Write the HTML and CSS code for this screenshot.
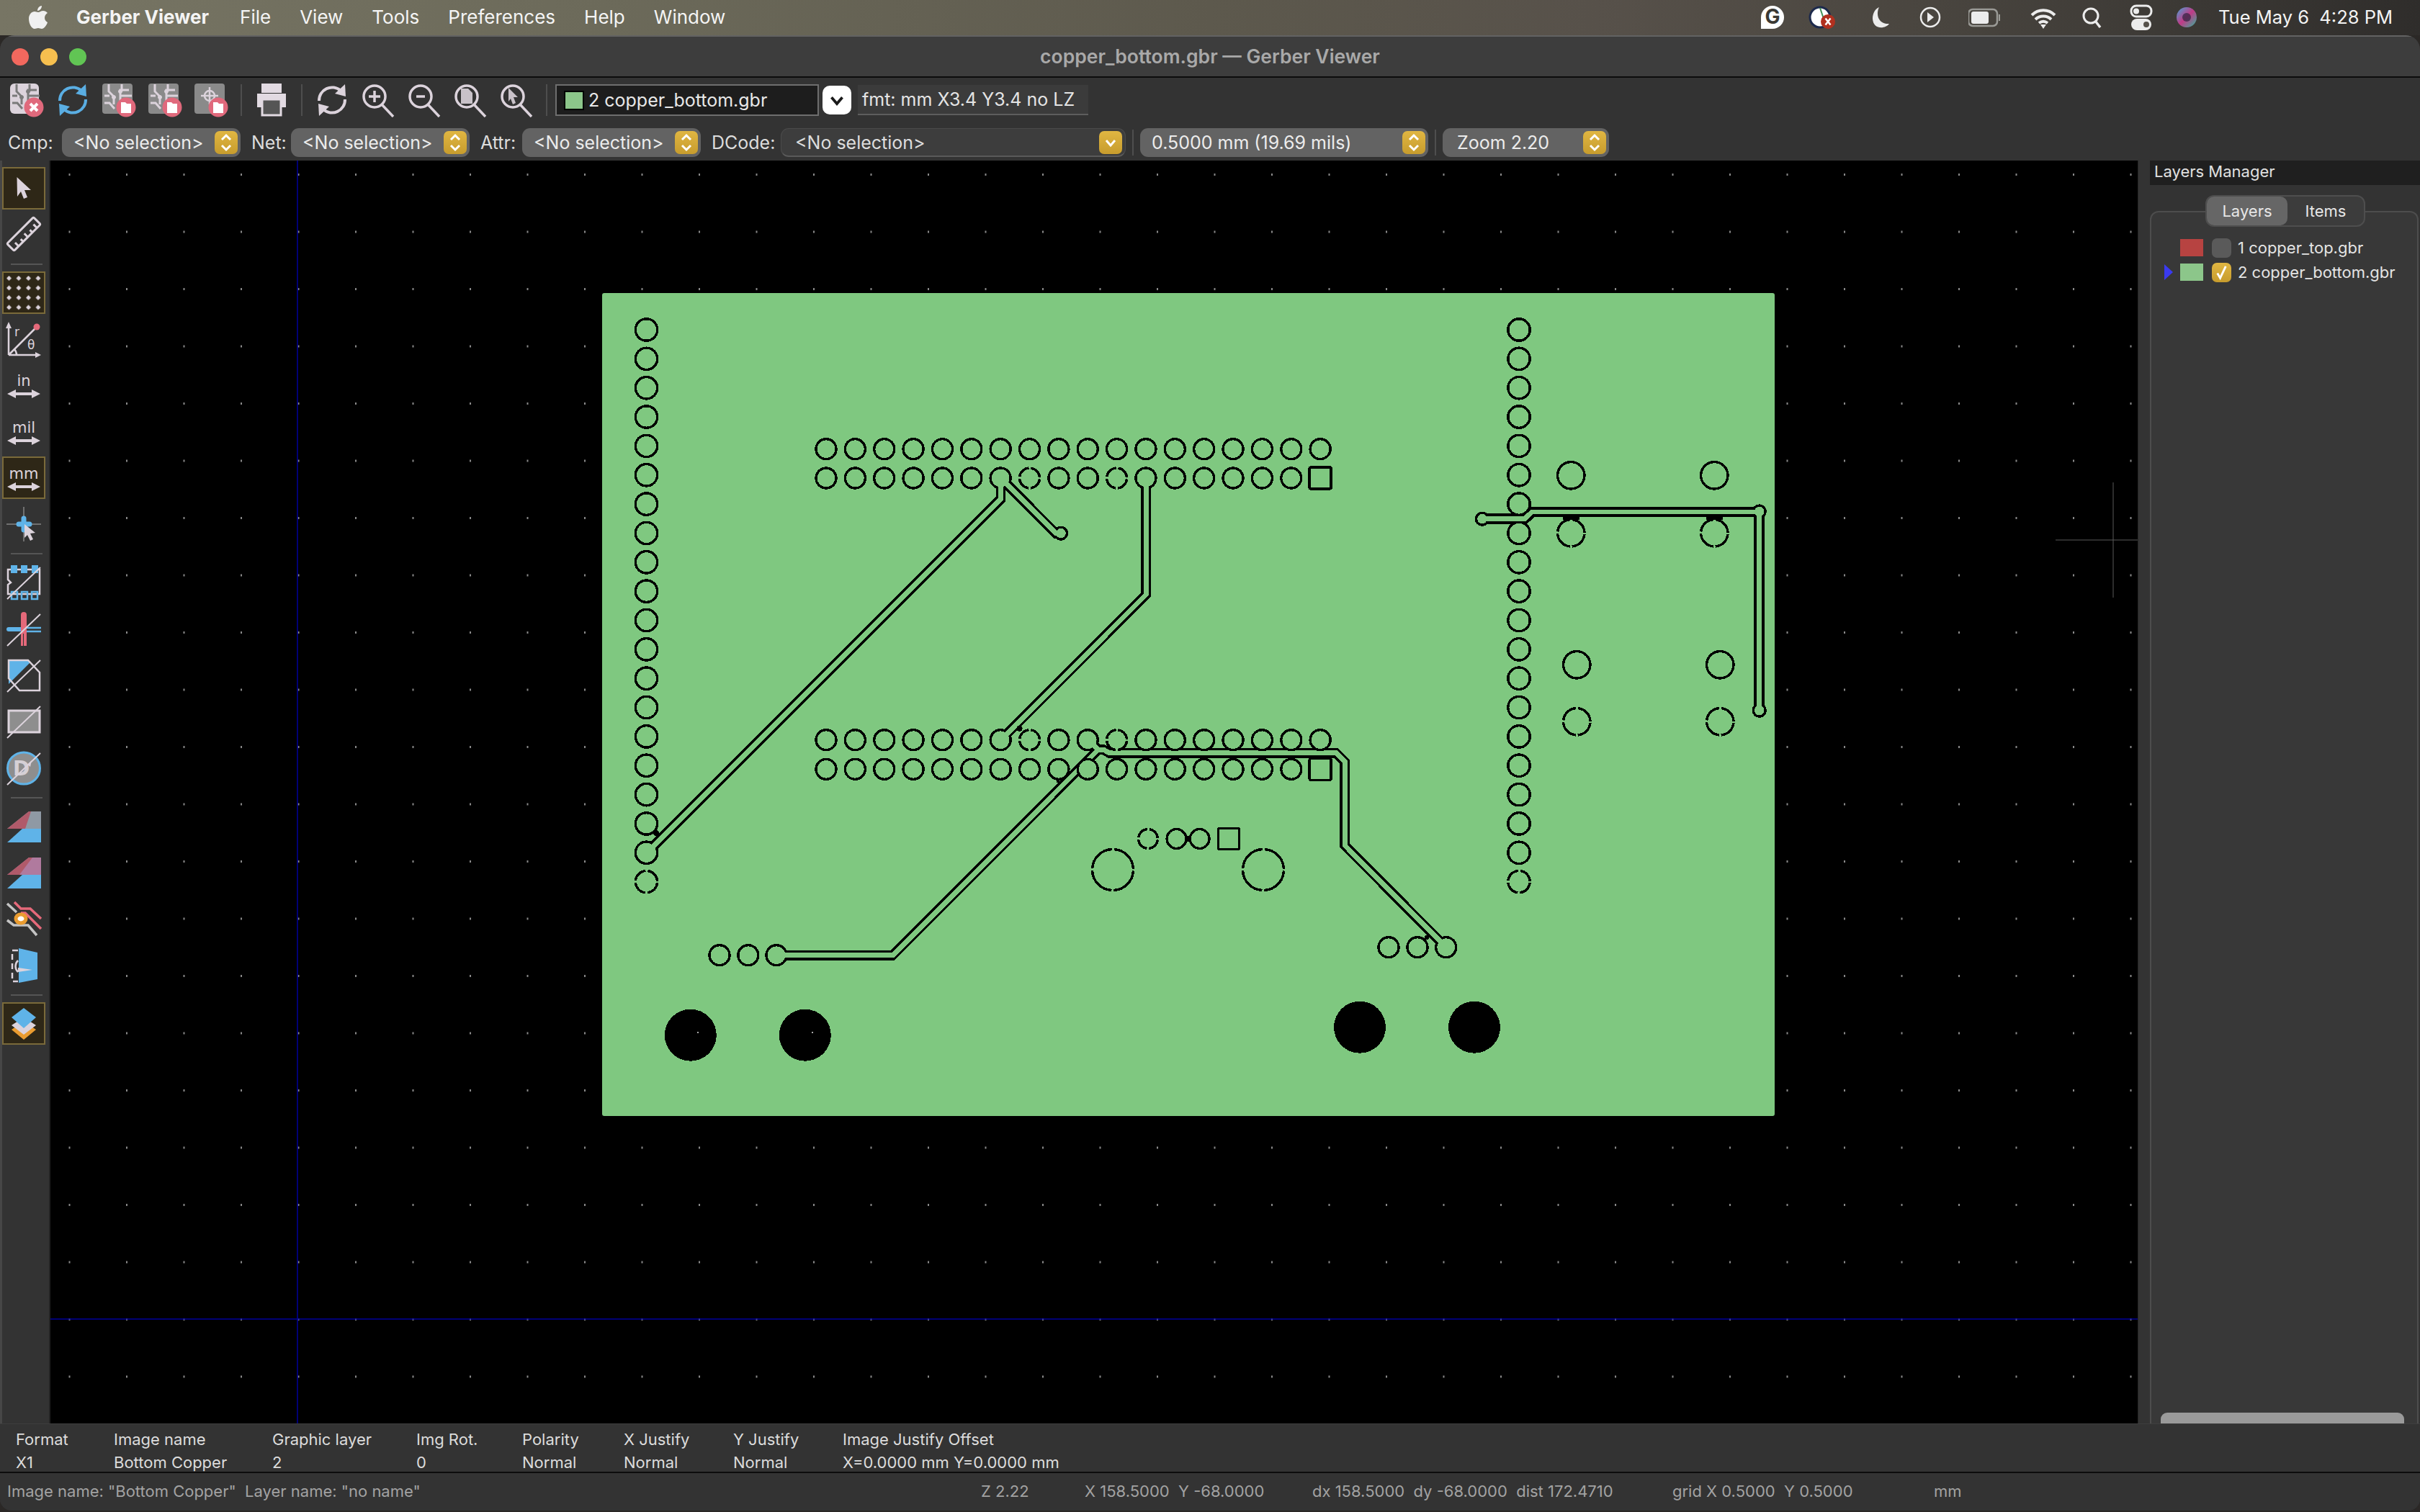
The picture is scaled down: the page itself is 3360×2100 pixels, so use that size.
FILE: index.html
```html
<!DOCTYPE html>
<html lang="en">
  <head>
    <meta charset="UTF-8" />
    <title>copper_bottom.gbr — Gerber Viewer</title>
    <link rel="stylesheet" href="styles.css">
  </head>
  <body>
    <svg class="defs" width="0" height="0">
      <symbol id="i-updown" viewBox="0 0 32 32">
        <path class="chev" d="M10 12 L16 6 L22 12 M10 20 L16 26 L22 20" />
      </symbol>
      <symbol id="i-down" viewBox="0 0 32 32">
        <path class="chev" d="M10 13 L16 20 L22 13" />
      </symbol>
      <symbol id="i-traces" viewBox="0 0 48 48">
        <path d="M10 2 V12 L17 19 V30 M4 18 H11 M4 28 H11 L18 36 M28 2 V12 M38 10 H26 V24 L36 32 M26 18 H42 M42 26 H34" fill="none" stroke-width="3" />
        <circle cx="17" cy="20" r="2.5" /><circle cx="26" cy="12" r="2.5" />
      </symbol>
      <symbol id="i-folder-badge" viewBox="0 0 48 48">
        <circle cx="34" cy="34" r="13.5" fill="#e0697c" />
        <path d="M27 27 H33 L35 29 H41 V42 H27 Z" fill="#ffffff" />
      </symbol>
    </svg>

    <div class="menubar">
      <svg class="apple" viewBox="0 0 28 34"><path d="M19 1 C19 5 16 8 13 8 C13 4 16 1 19 1 Z M14 10 C16 10 18 8 21 8 C23 8 25.500 9 27 11 C24 13 23 15 23 18 C23 21 25 23 27 24 C26 28 22 33 19 33 C17 33 16 32 14 32 C12 32 11 33 9 33 C5 33 1 26 1 19 C1 13 5 9 9 9 C11 9 12.500 10 14 10 Z" /></svg>
      <span class="app-name">Gerber Viewer</span>
      <span class="menu-item">File</span>
      <span class="menu-item">View</span>
      <span class="menu-item">Tools</span>
      <span class="menu-item">Preferences</span>
      <span class="menu-item">Help</span>
      <span class="menu-item">Window</span>
      <div class="tray">
        <svg class="tray-icon" viewBox="0 0 44 40"><path d="M22 4 A16 16 0 1 1 22 36 H6 V20 A16 16 0 0 1 22 4 Z" fill="#ffffff" /><text class="tray-g" x="22" y="29">G</text></svg>
        <svg class="tray-icon gap-a" viewBox="0 0 44 40"><circle cx="17" cy="20" r="14" fill="#ffffff" stroke="#1d2a4c" stroke-width="3" /><path d="M17 7 L22 22" stroke="#3f8f55" stroke-width="2" /><circle cx="28" cy="26" r="10" fill="#b1301f" /><path d="M24.500 21.500 L31.500 30.500 M31.500 21.500 L24.500 30.500" stroke="#ffffff" stroke-width="2.500" /></svg>
        <svg class="tray-icon gap-b" viewBox="0 0 44 40"><path d="M20 6 C15 16 19 30 34 29 C29 36 12 38 11 22 C11 14 15 8 20 6 Z" fill="#ececec" /></svg>
        <svg class="tray-icon gap-c" viewBox="0 0 44 40"><circle cx="22" cy="24" r="13" fill="none" stroke="#ececec" stroke-width="2.500" transform="translate(0 -4)" /><path d="M18 13 L27 20 L18 27 Z" fill="#ececec" /></svg>
        <svg class="tray-icon gap-d" viewBox="0 0 44 40"><rect x="0" y="9" width="40" height="23" rx="6" fill="none" stroke="#9a9a96" stroke-width="2.500" /><rect x="4" y="12" width="24" height="17" rx="3" fill="#ececec" /><rect x="42" y="16" width="2" height="9" fill="#9a9a96" /></svg>
        <svg class="tray-icon gap-e" viewBox="0 0 44 40"><path d="M6 17 C15 8 29 8 38 17 M11 23 C17 17 27 17 33 23 M16 28 C20 25 24 25 28 28" fill="none" stroke="#ececec" stroke-width="4" /><path d="M18 30 L26 30 L22 36 Z" fill="#ececec" /></svg>
        <svg class="tray-icon gap-f" viewBox="0 0 44 40"><circle cx="20" cy="18" r="10" fill="none" stroke="#ececec" stroke-width="3" /><path d="M26 25 L33 34" stroke="#ececec" stroke-width="3.500" /></svg>
        <svg class="tray-icon gap-f" viewBox="0 0 44 40"><rect x="8" y="4" width="28" height="15" rx="7" fill="none" stroke="#ececec" stroke-width="3" /><circle cx="15" cy="11.500" r="4" fill="#ececec" /><rect x="8" y="22" width="28" height="16" rx="8" fill="#ececec" /><circle cx="29" cy="30" r="4" fill="#55504a" /></svg>
        <svg class="tray-icon gap-g" viewBox="0 0 44 40"><defs><linearGradient id="siri" x1="0" y1="0" x2="1" y2="1"><stop offset="0" stop-color="#45a6d8" /><stop offset="0.500" stop-color="#c03a86" /><stop offset="1" stop-color="#2fb89c" /></linearGradient></defs><circle cx="22" cy="20" r="14" fill="url(#siri)" /><circle cx="22" cy="20" r="6" fill="#2e2340" opacity="0.700" /></svg>
        <span class="clock">Tue May 6&nbsp; 4:28 PM</span>
      </div>
    </div>

    <div class="window">
      <div class="titlebar">
        <div class="lights">
          <span class="light red"></span>
          <span class="light yellow"></span>
          <span class="light green"></span>
        </div>
        <span class="title">copper_bottom.gbr — Gerber Viewer</span>
      </div>

      <div class="toolbar top-row">
        <div class="tb-btn"><svg viewBox="0 0 48 48"><rect x="1" y="1" width="40" height="42" rx="6" fill="#dcd3dc" /><use href="#i-traces" class="traces-dark" /><circle cx="34" cy="34" r="13.500" fill="#e0697c" /><path d="M29 29 L39 39 M39 29 L29 39" stroke="#ffffff" stroke-width="4" /></svg></div>
        <div class="tb-btn"><svg viewBox="0 0 48 48"><path class="arc-blue" d="M6 25 A18 18 0 0 1 36 11" /><path d="M42 2 L43 19 L28 15 Z" fill="#5aaee3" /><path class="arc-blue" d="M42 23 A18 18 0 0 1 12 37" /><path d="M6 46 L5 29 L20 33 Z" fill="#5aaee3" /></svg></div>
        <div class="tb-btn"><svg viewBox="0 0 48 48"><rect x="1" y="1" width="42" height="42" rx="4" fill="#8a8a8a" /><use href="#i-traces" class="traces-light" /><use href="#i-folder-badge" /></svg></div>
        <div class="tb-btn"><svg viewBox="0 0 48 48"><rect x="1" y="1" width="42" height="42" rx="4" fill="#8a8a8a" /><use href="#i-traces" class="traces-light" /><use href="#i-folder-badge" /></svg></div>
        <div class="tb-btn"><svg viewBox="0 0 48 48"><rect x="1" y="1" width="42" height="42" rx="4" fill="#8a8a8a" /><circle cx="22" cy="18" r="7" class="line-lilac" /><path class="line-lilac" d="M22 6 V30 M10 18 H34" /><use href="#i-folder-badge" /></svg></div>
        <span class="tb-sep"></span>
        <div class="tb-btn"><svg viewBox="0 0 48 48"><path d="M10 1 H38 V14 H10 Z" fill="#e2dae2" /><path d="M4 15 H44 V34 H37 V24 H11 V34 H4 Z" fill="#e2dae2" /><path d="M11 23 H37 V45 H11 Z" fill="#555555" stroke="#e2dae2" stroke-width="3" /></svg></div>
        <span class="tb-sep"></span>
        <div class="tb-btn"><svg viewBox="0 0 48 48"><path class="arc-lilac" d="M6 25 A18 18 0 0 1 36 11" /><path d="M42 2 L43 19 L28 15 Z" fill="#dcd3dc" /><path class="arc-lilac" d="M42 23 A18 18 0 0 1 12 37" /><path d="M6 46 L5 29 L20 33 Z" fill="#dcd3dc" /></svg></div>
        <div class="tb-btn"><svg viewBox="0 0 48 48"><circle cx="19" cy="19" r="15" class="lens" /><path class="lens" d="M29 30 L45 47" /><path class="lens" d="M11 19 H27 M19 11 V27" /></svg></div>
        <div class="tb-btn"><svg viewBox="0 0 48 48"><circle cx="19" cy="19" r="15" class="lens" /><path class="lens" d="M29 30 L45 47" /><path class="lens" d="M13 19 H25" /></svg></div>
        <div class="tb-btn"><svg viewBox="0 0 48 48"><circle cx="19" cy="19" r="15" class="lens" /><path class="lens" d="M29 30 L45 47" /><path d="M11 8 H21 L27 14 V29 H11 Z" fill="#c9c2c9" /></svg></div>
        <div class="tb-btn"><svg viewBox="0 0 48 48"><circle cx="19" cy="19" r="15" class="lens" /><path class="lens" d="M29 30 L45 47" /><path d="M13 7 L26 20 L20 20 L23 28 L19 30 L16 22 L13 26 Z" fill="#c9c2c9" /></svg></div>
        <span class="tb-sep"></span>
        <div class="layer-combo">
          <span class="combo-swatch"></span>
          <span>2 copper_bottom.gbr</span>
        </div>
        <div class="combo-arrow"><svg viewBox="0 0 32 32"><use href="#i-down" /></svg></div>
        <div class="fmt-box">fmt: mm X3.4 Y3.4 no LZ</div>
      </div>

      <div class="toolbar bottom-row">
        <label class="tb-label cmp">Cmp:</label>
        <div class="select w-sel"><span>&lt;No selection&gt;</span><span class="stepper"><svg viewBox="0 0 32 32"><use href="#i-updown" /></svg></span></div>
        <label class="tb-label net">Net:</label>
        <div class="select w-sel"><span>&lt;No selection&gt;</span><span class="stepper"><svg viewBox="0 0 32 32"><use href="#i-updown" /></svg></span></div>
        <label class="tb-label attr">Attr:</label>
        <div class="select w-sel"><span>&lt;No selection&gt;</span><span class="stepper"><svg viewBox="0 0 32 32"><use href="#i-updown" /></svg></span></div>
        <label class="tb-label dcode">DCode:</label>
        <div class="select select-dark w-dcode"><span>&lt;No selection&gt;</span><span class="stepper"><svg viewBox="0 0 32 32"><use href="#i-down" /></svg></span></div>
        <span class="tb-sep short"></span>
        <div class="select w-grid"><span>0.5000 mm (19.69 mils)</span><span class="stepper"><svg viewBox="0 0 32 32"><use href="#i-updown" /></svg></span></div>
        <span class="tb-sep short"></span>
        <div class="select w-zoom"><span>Zoom 2.20</span><span class="stepper"><svg viewBox="0 0 32 32"><use href="#i-updown" /></svg></span></div>
      </div>

      <div class="workspace">
        <div class="side-tools">
          <div class="tool on"><svg viewBox="0 0 48 48"><path class="fill-lilac" d="M14.500 9 L34 27 L25 27 L29 37 L24 39 L20 29 L15 36 Z" /></svg></div>
          <div class="tool"><svg viewBox="0 0 48 48"><g transform="rotate(-45 24 24)"><rect x="-2" y="17" width="52" height="14" rx="2" class="line-lilac thick" /><path class="line-lilac thick" d="M7 31 V24 M16 31 V26 M25 31 V24 M34 31 V26 M43 31 V24" /></g></svg></div>
          <span class="side-sep"></span>
          <div class="tool on"><svg viewBox="0 0 48 48"><defs><pattern id="tool-dots" x="-3" y="-3" width="13.500" height="13.500" patternUnits="userSpaceOnUse"><path class="fill-lilac" d="M6.500 3 L10 6.500 L6.500 10 L3 6.500 Z" /></pattern></defs><rect width="48" height="48" fill="url(#tool-dots)" /></svg></div>
          <div class="tool"><svg viewBox="0 0 48 48"><path class="line-lilac" d="M3 46 V6 M3 46 H42 M3 46 L40 9" /><path class="fill-lilac" d="M3 0 L7 9 H-1 Z M48 46 L40 42 V50 Z" /><circle cx="42" cy="7" r="4.500" fill="#e5697a" /><path class="line-lilac" d="M14 46 A12 12 0 0 0 11 38" /><text class="polar-text" x="11" y="20">r</text><text class="polar-text" x="29" y="38">θ</text></svg></div>
          <div class="tool"><svg viewBox="0 0 48 48"><text class="unit-text" x="24" y="25">in</text><path class="fill-lilac" d="M1 36 L13 30 V34 H35 V30 L47 36 L35 42 V38 H13 V42 Z" /></svg></div>
          <div class="tool"><svg viewBox="0 0 48 48"><text class="unit-text" x="24" y="25">mil</text><path class="fill-lilac" d="M1 36 L13 30 V34 H35 V30 L47 36 L35 42 V38 H13 V42 Z" /></svg></div>
          <div class="tool on"><svg viewBox="0 0 48 48"><text class="unit-text" x="24" y="25">mm</text><path class="fill-lilac" d="M1 36 L13 30 V34 H35 V30 L47 36 L35 42 V38 H13 V42 Z" /></svg></div>
          <div class="tool"><svg viewBox="0 0 48 48"><path class="line-gray" d="M24 0 V48 M0 24 H48" /><path class="blue-plus" d="M17 24 H32 M24 16 V32" /><path class="fill-lilac" d="M25 24 L40 36 L33 37 L37 45 L33 47 L29 39 L25 43 Z" /></svg></div>
          <span class="side-sep"></span>
          <div class="tool"><svg viewBox="0 0 48 48"><path class="line-lilac" d="M2 6 H46 V40 H2 V27 L6 24 L2 20 Z" /><path class="fill-blue" d="M6 0 H15 V11 H6 Z M20 0 H29 V11 H20 Z M35 0 H44 V11 H35 Z" /><path class="line-blue" d="M7 37 H15 V47 H7 Z M21 37 H29 V47 H21 Z M35 37 H43 V47 H35 Z" /><path class="slash" d="M1 47 L47 3" /></svg></div>
          <div class="tool"><svg viewBox="0 0 48 48"><path class="fill-blue" d="M0 24 A3 3 0 0 1 3 21 H20 V27 H3 A3 3 0 0 1 0 24 Z" /><path class="line-blue" d="M28 22 H48 M28 27 H48" /><path d="M20 4 A4 4 0 0 1 28 4 V47 H24 V30 H23 V47 H20 Z" fill="#e5697a" /><path class="slash" d="M1 47 L47 3" /></svg></div>
          <div class="tool"><svg viewBox="0 0 48 48"><path d="M3 3 H30 L33 6 L3 36 Z" fill="#5fb3e8" /><path class="line-lilac" d="M3 3 H30 L46 20 V45 H18 L3 28 Z" /><path class="slash" d="M1 47 L47 3" /></svg></div>
          <div class="tool"><svg viewBox="0 0 48 48"><rect x="3" y="9" width="43" height="30" fill="#8e8e8e" class="line-lilac-on" /><path class="slash" d="M1 47 L47 3" /></svg></div>
          <div class="tool"><svg viewBox="0 0 48 48"><ellipse cx="24" cy="24" rx="22.500" ry="22" fill="#8e8e8e" stroke="#5fb3e8" stroke-width="3" /><text class="d-text" x="9" y="34">D</text><path class="fill-lilac" d="M29 19 L35 13 L33 22 Z" /><path class="slash" d="M1 47 L47 3" /></svg></div>
          <span class="side-sep"></span>
          <div class="tool"><svg viewBox="0 0 48 48"><path d="M1 27 L31 3 H48 V27 Z" fill="#8f99a4" /><path d="M1 27 L31 3 H34 L10 27 Z M10 27 L34 3 L26 27 Z" fill="#b05a6a" /><path d="M1 46 L22 27 H48 V46 Z" fill="#5fb3e8" /></svg></div>
          <div class="tool"><svg viewBox="0 0 48 48"><path d="M1 27 L31 3 H48 V27 Z" fill="#b07a9e" /><path d="M1 27 L31 3 H36 L18 27 Z" fill="#b05a6a" /><path d="M1 46 L22 27 H48 V46 Z" fill="#5fb3e8" /></svg></div>
          <div class="tool"><svg viewBox="0 0 48 48"><path class="net-pink" d="M11 1 L20 10 H33 L48 24 M20 16 H26 L48 38" /><path class="net-gray" d="M1 3 L14 15 M1 26 L10 33 H30 L42 47" /><ellipse cx="20" cy="24" rx="7" ry="6" fill="#ffffff" stroke="#ea9c30" stroke-width="5" /></svg></div>
          <div class="tool"><svg viewBox="0 0 48 48"><path class="line-lilac dash" d="M16 3 H8 V46 H16" /><path d="M17 0 L43 6 V43 L17 48 Z" fill="#5fb3e8" /><path class="line-lilac" d="M16 17 A11 11 0 0 0 16 33" /><path class="fill-lilac" d="M16 27 L36 30 L16 33 Z" /></svg></div>
          <span class="side-sep"></span>
          <div class="tool on"><svg viewBox="0 0 48 48"><path d="M7 32 L24 21 L41 32 L24 46 Z" fill="#ea9c30" /><path d="M7 26 L24 15 L41 26 L24 39 Z" fill="#dcd3dc" /><path d="M7 15 L24 2 L41 15 L24 30 Z" fill="#5fb3e8" /></svg></div>
        </div>

        <div class="canvas">
          <svg id="board" viewBox="70 223 2898 1755" width="2898" height="1755">
            <defs>
              <pattern id="grid" x="890.500" y="400" width="79.500" height="79.500" patternUnits="userSpaceOnUse">
                <rect class="grid-dot" x="0" y="0" width="2" height="3" />
              </pattern>
            </defs>
            <rect x="70" y="223" width="2898" height="1755" fill="url(#grid)" />
            <path class="axis" d="M413 223 V1978 M70 1832 H2968" />
            <path class="cursor-cross" d="M2934 670 V830 M2854 750 H2968" />
            <rect class="board-plate" x="836" y="407" width="1628" height="1143" rx="3" />
            <g id="copper"></g>
          </svg>
        </div>

        <div class="layers-panel">
          <div class="panel-title">Layers Manager</div>
          <div class="tabs">
            <span class="tab active">Layers</span>
            <span class="tab">Items</span>
          </div>
          <div class="group">
            <div class="layer-row">
              <span class="row-arrow"></span>
              <span class="layer-swatch red"></span>
              <span class="check"></span>
              <span>1 copper_top.gbr</span>
            </div>
            <div class="layer-row">
              <span class="row-arrow current"></span>
              <span class="layer-swatch green"></span>
              <span class="check checked"><svg viewBox="0 0 28 28"><path d="M8 15 L12 22 L20 5" /></svg></span>
              <span>2 copper_bottom.gbr</span>
            </div>
            <div class="hscroll"></div>
          </div>
        </div>
      </div>

      <div class="msg-panel">
        <div class="msg-col c-format"><span>Format</span><span>X1</span></div>
        <div class="msg-col c-name"><span>Image name</span><span>Bottom Copper</span></div>
        <div class="msg-col c-layer"><span>Graphic layer</span><span>2</span></div>
        <div class="msg-col c-rot"><span>Img Rot.</span><span>0</span></div>
        <div class="msg-col c-pol"><span>Polarity</span><span>Normal</span></div>
        <div class="msg-col c-xj"><span>X Justify</span><span>Normal</span></div>
        <div class="msg-col c-yj"><span>Y Justify</span><span>Normal</span></div>
        <div class="msg-col"><span>Image Justify Offset</span><span>X=0.0000 mm Y=0.0000 mm</span></div>
      </div>

      <div class="statusbar">
        <span class="s-image">Image name: "Bottom Copper"&nbsp; Layer name: "no name"</span>
        <span class="s-zoom">Z 2.22</span>
        <span class="s-pos">X 158.5000&nbsp; Y -68.0000</span>
        <span class="s-delta">dx 158.5000&nbsp; dy -68.0000&nbsp; dist 172.4710</span>
        <span class="s-grid">grid X 0.5000&nbsp; Y 0.5000</span>
        <span>mm</span>
      </div>
    </div>

    <script src="board.js"></script>
  </body>
</html>
```

FILE: styles.css
```css
* {
  margin: 0;
  padding: 0;
  box-sizing: border-box;
}

body {
  width: 3360px;
  height: 2100px;
  overflow: hidden;
  background: #2b2826;
  font-family: "Inter", "Liberation Sans", sans-serif;
  color: #e4e4e4;
}

.defs {
  position: absolute;
}

.chev {
  fill: none;
  stroke: currentColor;
  stroke-width: 3;
}

/* Menu bar */
.menubar {
  height: 49px;
  display: flex;
  align-items: center;
  padding: 0 38px 2px 39px;
  background: linear-gradient(90deg, #777564 0%, #6c6a5a 25%, #5d594d 50%, #57514a 66%, #49453f 80%, #2f2d2b 100%);
  font-size: 26px;
  color: #f4f4f4;
}

.apple {
  width: 28px;
  height: 34px;
  fill: #f0f0f0;
  margin-right: 39px;
}

.app-name {
  font-weight: 700;
  margin-right: 43px;
}

.menu-item {
  margin-right: 40px;
}

.tray {
  margin-left: auto;
  display: flex;
  align-items: center;
}

.tray-icon {
  width: 44px;
  height: 40px;
}

.tray-g {
  font-size: 28px;
  font-weight: 700;
  text-anchor: middle;
  fill: #3b3934;
}

.gap-a { margin-left: 27px; }
.gap-b { margin-left: 35px; }
.gap-c { margin-left: 25px; }
.gap-d { margin-left: 31px; }
.gap-e { margin-left: 38px; }
.gap-f { margin-left: 24px; }
.gap-g { margin-left: 19px; }

.clock {
  margin-left: 22px;
  font-size: 25.500px;
}

/* Window */
.window {
  height: 2049px;
  display: flex;
  flex-direction: column;
  background: #333333;
  border-radius: 20px 20px 16px 16px;
  overflow: hidden;
}

.titlebar {
  height: 59px;
  flex-shrink: 0;
  position: relative;
  display: flex;
  align-items: center;
  justify-content: center;
  padding-bottom: 2px;
  background: #3d3d3d;
  border-top: 2px solid #626262;
  border-bottom: 2px solid #0c0c0c;
}

.lights {
  position: absolute;
  left: 16px;
  top: 16px;
  display: flex;
  gap: 16px;
}

.light {
  width: 24px;
  height: 24px;
  border-radius: 50%;
}

.light.red { background: #f2685e; }
.light.yellow { background: #f6bf4f; }
.light.green { background: #61c554; }

.title {
  font-size: 26.500px;
  font-weight: 600;
  color: #a9a9a9;
}

.toolbar {
  display: flex;
  align-items: center;
  flex-shrink: 0;
  background: #333333;
  font-size: 25px;
}

.top-row {
  height: 62px;
  padding-left: 5px;
}

.bottom-row {
  height: 53px;
  padding: 3px 0 0 11px;
}

.tb-btn {
  width: 64px;
  height: 48px;
  display: flex;
  justify-content: center;
}

.tb-btn svg {
  width: 48px;
  height: 48px;
}

.tb-sep {
  width: 2px;
  height: 44px;
  margin: 0 9px;
  background: #4e4e4e;
}

.tb-sep.short {
  height: 36px;
}

.traces-dark {
  stroke: #7a7a7a;
  fill: #7a7a7a;
}

.traces-light {
  stroke: #dcd3dc;
  fill: #dcd3dc;
}

.arc-blue {
  fill: none;
  stroke: #5aaee3;
  stroke-width: 4;
}

.arc-lilac {
  fill: none;
  stroke: #dcd3dc;
  stroke-width: 4;
}

.lens {
  fill: none;
  stroke: #dcd3dc;
  stroke-width: 3.500;
}

.line-lilac {
  fill: none;
  stroke: #dcd3dc;
  stroke-width: 2.500;
}

.line-lilac.thick {
  stroke-width: 3;
}

.line-lilac.dash {
  stroke-dasharray: 8 5;
}

.line-lilac-on {
  stroke: #dcd3dc;
  stroke-width: 3;
}

.line-blue {
  fill: none;
  stroke: #5fb3e8;
  stroke-width: 2.500;
}

.line-gray {
  fill: none;
  stroke: #858585;
  stroke-width: 1.500;
}

.fill-lilac { fill: #dcd3dc; }
.fill-blue { fill: #5fb3e8; }

.slash {
  fill: none;
  stroke: #dcd3dc;
  stroke-width: 2;
}

.blue-plus {
  fill: none;
  stroke: #5fb3e8;
  stroke-width: 7;
  stroke-linecap: round;
}

.net-pink {
  fill: none;
  stroke: #e5697a;
  stroke-width: 3.500;
}

.net-gray {
  fill: none;
  stroke: #c4c4c4;
  stroke-width: 3.500;
}

.polar-text {
  font-family: "DejaVu Sans", sans-serif;
  font-size: 17px;
  fill: #dcd3dc;
}

.unit-text {
  font-family: "DejaVu Sans", sans-serif;
  font-size: 21px;
  text-anchor: middle;
  fill: #dcd3dc;
}

.d-text {
  font-family: "DejaVu Sans", sans-serif;
  font-size: 28px;
  font-weight: 700;
  fill: #d5d0d5;
}

.layer-combo {
  width: 366px;
  height: 44px;
  margin-left: 2px;
  display: flex;
  align-items: center;
  gap: 6px;
  padding-left: 10px;
  background: #1d1d1d;
  border: 2px solid #6e6e6e;
  color: #e8e8e8;
}

.combo-swatch {
  width: 28px;
  height: 27px;
  background: #8cc68a;
  border: 2px solid #000000;
}

.combo-arrow {
  width: 40px;
  height: 40px;
  margin-left: 5px;
  background: #ffffff;
  border-radius: 10px;
  color: #1a1a1a;
}

.combo-arrow svg {
  display: block;
}

.fmt-box {
  width: 320px;
  height: 42px;
  margin-left: 9px;
  display: flex;
  align-items: center;
  padding-left: 6px;
  background: #3b3b3b;
  border-bottom: 2px solid #5d5d5d;
  white-space: nowrap;
}

.tb-label {
  color: #dcdcdc;
}

.cmp { width: 75px; }
.net { width: 55px; margin-left: 15px; }
.attr { width: 58px; margin-left: 15px; }
.dcode { width: 96px; margin-left: 15px; }

.select {
  height: 40px;
  display: flex;
  align-items: center;
  justify-content: space-between;
  padding: 0 4px 0 16px;
  background: #636363;
  border-radius: 11px;
  color: #ececec;
  white-space: nowrap;
}

.select-dark {
  background: #3d3d3d;
  border: 1px solid #4b4b4b;
  border-bottom: 2px solid #5a5a5a;
  padding-left: 19px;
  color: #dddddd;
}

.w-sel { width: 248px; }
.w-dcode { width: 479px; }
.w-grid { width: 400px; }
.w-zoom { width: 231px; padding-left: 20px; }

.stepper {
  width: 32px;
  height: 32px;
  border-radius: 7px;
  background: linear-gradient(#e0b642, #c79c2d);
  color: #ffffff;
}

.stepper svg {
  display: block;
}

/* Workspace */
.workspace {
  flex: 1;
  min-height: 0;
  display: flex;
}

.side-tools {
  width: 70px;
  flex-shrink: 0;
  display: flex;
  flex-direction: column;
  padding: 6px 0 0 3px;
  background: #333333;
  border-left: 3px solid #474747;
  border-right: 2px solid #232323;
}

.tool {
  width: 60px;
  height: 59px;
  margin: 2.650px 0;
  flex-shrink: 0;
  margin-left: -3px;
  display: flex;
  align-items: center;
  justify-content: center;
  border: 2px solid transparent;
}

.tool.on {
  background: #2e2717;
  border-color: #7a6a3a;
}

.tool svg {
  width: 48px;
  height: 48px;
  overflow: visible;
}

.side-sep {
  width: 44px;
  height: 2px;
  flex-shrink: 0;
  margin: 8px 0 7px 9px;
  background: #555555;
}

.canvas {
  width: 2898px;
  flex-shrink: 0;
  background: #000000;
}

.canvas svg {
  display: block;
}

.grid-dot {
  fill: #8a8a8a;
}

.axis {
  fill: none;
  stroke: #00009c;
  stroke-width: 1.500;
}

.cursor-cross {
  fill: none;
  stroke: #5a5a5a;
  stroke-width: 1;
}

.board-plate {
  fill: #7fc880;
}

#copper {
  shape-rendering: crispEdges;
}

.trace-outer {
  fill: none;
  stroke: #000000;
}

.trace-inner {
  fill: none;
  stroke: #7fc880;
}

.pad {
  fill: #7fc880;
  stroke: #000000;
}

.pad-ring {
  fill: none;
  stroke: #000000;
}

.pad-solid,
.blob {
  fill: #000000;
}

.hole-dot {
  fill: #a8a8a8;
}

/* Layers manager */
.layers-panel {
  flex: 1;
  min-width: 0;
  display: flex;
  flex-direction: column;
  padding-left: 16px;
  border-left: 1px solid #262626;
}

.panel-title {
  height: 34px;
  flex-shrink: 0;
  padding-left: 6px;
  background: #1f1f1f;
  font-size: 22px;
  line-height: 31px;
  color: #e0e0e0;
}

.tabs {
  position: relative;
  z-index: 1;
  align-self: center;
  margin-top: 14px;
  width: 222px;
  height: 44px;
  display: flex;
  background: #3c3c3c;
  border: 2px solid #4e4e4e;
  border-radius: 12px;
  font-size: 22px;
}

.tab {
  display: flex;
  align-items: center;
  justify-content: center;
  width: 106px;
  color: #e6e6e6;
}

.tab.active {
  width: 114px;
  background: #666666;
  border-radius: 10px;
}

.group {
  flex: 1;
  min-height: 0;
  margin-top: -22px;
  margin-right: 2px;
  padding-top: 32px;
  display: flex;
  flex-direction: column;
  background: #383838;
  border: 2px solid #4d4d4d;
  border-bottom: none;
  border-radius: 12px 12px 0 0;
  font-size: 22px;
  overflow: hidden;
}

.layer-row {
  height: 34px;
  flex-shrink: 0;
  display: flex;
  align-items: center;
  padding-left: 18px;
  color: #e4e4e4;
  white-space: nowrap;
}

.row-arrow {
  width: 12px;
  height: 22px;
  margin-right: 10px;
}

.row-arrow.current {
  background: #3a3af0;
  clip-path: polygon(0 0, 100% 50%, 0 100%);
}

.layer-swatch {
  width: 32px;
  height: 24px;
  margin-right: 12px;
}

.layer-swatch.red { background: #b74341; }
.layer-swatch.green { background: #8cc68a; }

.check {
  width: 27px;
  height: 27px;
  margin-right: 9px;
  background: #5a5a5a;
  border-radius: 7px;
}

.check.checked {
  background: linear-gradient(#e0b642, #c79c2d);
}

.check svg {
  display: block;
  fill: none;
  stroke: #ffffff;
  stroke-width: 3;
}

.hscroll {
  height: 17px;
  margin: auto 18px -2px 13px;
  flex-shrink: 0;
  background: #9a9a9a;
  border-radius: 9px 9px 0 0;
}

/* Bottom panels */
.msg-panel {
  height: 69px;
  flex-shrink: 0;
  display: flex;
  padding: 9px 0 0 22px;
  background: #333333;
  border-top: 1px solid #3e3e3e;
  border-bottom: 2px solid #0c0c0c;
  font-size: 22px;
  color: #dcdcdc;
}

.msg-col {
  display: flex;
  flex-direction: column;
  gap: 7px;
  line-height: 25px;
  white-space: nowrap;
}

.c-format { width: 136px; }
.c-name { width: 220px; }
.c-layer { width: 200px; }
.c-rot { width: 147px; }
.c-pol { width: 141px; }
.c-xj { width: 152px; }
.c-yj { width: 152px; }

.statusbar {
  height: 52px;
  flex-shrink: 0;
  display: flex;
  align-items: center;
  padding: 0 0 2px 10px;
  background: #333333;
  font-size: 22px;
  color: #a2a2a2;
  white-space: nowrap;
}

.s-image { width: 1352px; }
.s-zoom { width: 144px; }
.s-pos { width: 316px; }
.s-delta { width: 500px; }
.s-grid { width: 363px; }
```

FILE: board.js
```js
document.addEventListener("DOMContentLoaded", function () {
  const copper = document.getElementById("copper");
  const NS = "http://www.w3.org/2000/svg";

  function add(parent, tag, cls, attrs) {
    const el = document.createElementNS(NS, tag);
    el.setAttribute("class", cls);
    for (const key in attrs) {
      el.setAttribute(key, attrs[key]);
    }
    parent.appendChild(el);
    return el;
  }

  const pads = [];

  function pad(x, y, r, opts) {
    pads.push(Object.assign({ x: x, y: y, r: r, sw: 3.4 }, opts));
  }

  // long edge connectors
  for (let i = 0; i < 20; i++) {
    const y = 458 + i * 40.35;
    pad(897.5, y, 15.2, { thermal: i === 19, link: i === 18 });
    pad(2109, y, 15.2, { thermal: i === 19 });
  }

  // the two double row headers
  for (let i = 0; i < 18; i++) {
    const x = 1147 + i * 40.36;
    const hole = i === 7 || i === 10;
    pad(x, 623.7, 14);
    pad(x, 664, 14, { thermal: hole, link: i === 6 || i === 11, square: i === 17 });
    pad(x, 1027.7, 14, { thermal: hole, link: i === 6 || i === 9 });
    pad(x, 1068.3, 14, { square: i === 17 });
  }

  // small connectors
  pad(1594, 1165, 13.4, { thermal: true });
  pad(1633.5, 1165, 13.4);
  pad(1665.6, 1165, 13.4);
  pad(1706, 1165, 13.4, { square: true });
  pad(1545, 1208, 28.5, { thermal: true });
  pad(1754, 1208, 28.5, { thermal: true });

  pad(999, 1326.7, 14);
  pad(1038.8, 1326.7, 14);
  pad(1078, 1326.7, 14, { link: true });
  pad(1928, 1315.7, 14);
  pad(1968, 1315.7, 14);
  pad(2007.7, 1315.7, 14, { link: true });

  // switches on the right
  pad(2181.3, 660.3, 18.7);
  pad(2380.3, 660.3, 18.7);
  pad(2181.3, 740.3, 18.7, { thermal: true });
  pad(2380.3, 740.3, 18.7, { thermal: true });
  pad(2189.3, 923.3, 18.7);
  pad(2388.3, 923.3, 18.7);
  pad(2189.3, 1002.3, 18.7, { thermal: true });
  pad(2388.3, 1002.3, 18.7, { thermal: true });

  // vias
  pad(1473, 740.7, 8.5, { link: true });
  pad(2058, 720.7, 8.5, { link: true });
  pad(2442.7, 710.5, 8.5, { link: true });
  pad(2442.7, 986.7, 8.5, { link: true });

  const traces = [
    { w: 13.6, sw: 3.3, pts: [[897.5, 1185], [1389.5, 693], [1389.5, 664]] },
    { w: 13.6, sw: 3.3, pts: [[1389.5, 664], [1466, 740.7], [1473, 740.7]] },
    { w: 13.6, sw: 3.3, pts: [[1591, 664], [1591, 826], [1389.5, 1027.7]] },
    {
      w: 13.6,
      sw: 3.3,
      pts: [
        [1078, 1326.7], [1239.6, 1326.7], [1516, 1050], [1525, 1041], [1532, 1041],
        [1540, 1045.7], [1855, 1045.7], [1867, 1057.7], [1867, 1174], [2007.7, 1315.7],
      ],
    },
    { w: 13.6, sw: 3.3, pts: [[1510, 1027.7], [1525, 1041]] },
    { w: 14.5, sw: 3.8, pts: [[2058, 720.7], [2117, 720.7], [2127, 711], [2442.7, 711], [2442.7, 986.7]] },
  ];

  function tracePass(cls, widthOf) {
    traces.forEach(function (t) {
      add(copper, "polyline", cls, {
        points: t.pts.map((p) => p.join(",")).join(" "),
        "stroke-width": widthOf(t),
      });
    });
  }

  function drawPad(p, cls) {
    if (p.square) {
      const half = p.r + 1;
      return add(copper, "rect", cls, {
        x: p.x - half, y: p.y - half, width: half * 2, height: half * 2, rx: 2, "stroke-width": p.sw,
      });
    }
    const el = add(copper, "circle", cls, { cx: p.x, cy: p.y, r: p.r, "stroke-width": p.sw });
    if (p.thermal) {
      // four small gaps at the spokes
      const quarter = (2 * Math.PI * p.r) / 4;
      el.setAttribute("stroke-dasharray", quarter - 3 + " 3");
      el.setAttribute("stroke-dashoffset", -1.5);
    }
    return el;
  }

  tracePass("trace-outer", (t) => t.w);
  pads.forEach((p) => drawPad(p, "pad"));
  tracePass("trace-inner", (t) => t.w - t.sw * 2);
  pads.filter((p) => !p.link).forEach((p) => drawPad(p, "pad-ring"));

  // mounting holes, solid
  [[958.8, 1437.7], [1117.8, 1437.7], [1888, 1426.7], [2047, 1426.7]].forEach(function (c) {
    add(copper, "circle", "pad-solid", { cx: c[0], cy: c[1], r: 36 });
  });
  add(copper, "rect", "hole-dot", { x: 968, y: 1433, width: 2, height: 2 });
  add(copper, "rect", "hole-dot", { x: 1127, y: 1433, width: 2, height: 2 });

  // spots where the outlines run together
  [[911, 1157, 4], [1415.6, 1011.7, 4], [1981, 1302, 3], [1649.5, 1165, 4], [1469, 1085, 2.5]].forEach(function (c) {
    add(copper, "circle", "blob", { cx: c[0], cy: c[1], r: c[2] });
  });
  add(copper, "rect", "blob", { x: 2170, y: 716, width: 23, height: 6 });
  add(copper, "rect", "blob", { x: 2369, y: 716, width: 23, height: 6 });
});
```
